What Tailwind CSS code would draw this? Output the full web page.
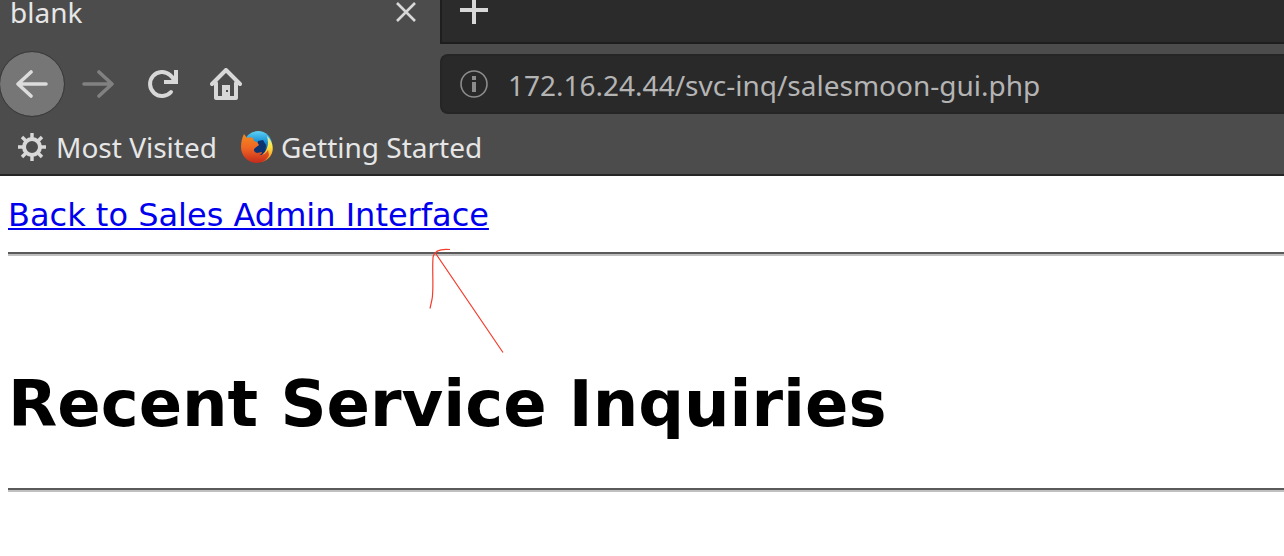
<!DOCTYPE html>
<html lang="en">
<head>
    <meta charset="UTF-8">
    <meta name="viewport" content="width=device-width, initial-scale=1.0">
    <title>Recent Service Inquiries</title>
    <script src="https://cdn.jsdelivr.net/npm/@tailwindcss/browser@4"></script>
</head>
<body class="bg-white overflow-hidden">
<!-- Browser chrome -->
<header class="bg-[#4c4c4c] border-b-2 border-[#252525] text-[#e6e6e6] font-['Noto_Sans',sans-serif] text-[28px] leading-[38px]">
    <!-- Tabs -->
    <div class="flex h-11">
        <div class="w-[440px] shrink-0 flex items-start justify-between pl-[10px] pr-6">
            <span class="leading-6">blank</span>
            <button aria-label="Close tab" class="mt-[2px]">
                <svg class="w-5 h-5" viewBox="0 0 20 20" fill="none" stroke="#d8d8d8" stroke-width="2.6"><path d="M1 1l18 18M19 1L1 19"/></svg>
            </button>
        </div>
        <div class="flex-1 flex items-start bg-[#2b2b2b] border-l-2 border-b-2 border-[#1e1e1e] pl-[18px]">
            <button aria-label="New tab">
                <svg class="w-7 h-6" viewBox="0 0 28 24" fill="none" stroke="#d8d8d8" stroke-width="4"><path d="M0 10h28M14 0v24"/></svg>
            </button>
        </div>
    </div>

    <!-- Navigation -->
    <nav class="flex items-center h-20">
        <div class="w-[440px] shrink-0 flex items-center">
            <button aria-label="Back" class="w-16 h-16 rounded-full bg-[#767676] outline-1 outline-[#3a3a3a] flex items-center justify-center">
                <svg class="w-8 h-8" viewBox="0 0 32 32" fill="none" stroke="#dcdcdc" stroke-width="3.6" stroke-linecap="round" stroke-linejoin="round"><path d="M15 4L2 16l13 12M2 16h28"/></svg>
            </button>
            <button aria-label="Forward" class="ml-[18px]">
                <svg class="w-8 h-8" viewBox="0 0 32 32" fill="none" stroke="#818181" stroke-width="3.6" stroke-linecap="round" stroke-linejoin="round"><path d="M17 4l13 12-13 12M30 16H2"/></svg>
            </button>
            <button aria-label="Reload" class="ml-8">
                <svg class="w-8 h-8" viewBox="0 0 32 32" fill="none" stroke="#d8d8d8" stroke-width="4"><path d="M25 24A12 12 0 1 1 24 7l4 4" stroke-linecap="round"/><path d="M30 2v12H18"/><path d="M30 7v7h-7z" fill="#d8d8d8" stroke="none"/></svg>
            </button>
            <button aria-label="Home" class="ml-8">
                <svg class="w-8 h-8" viewBox="0 0 32 32" fill="none" stroke="#d8d8d8" stroke-width="4" stroke-linecap="round" stroke-linejoin="round"><path d="M2 16L16 2l14 14M6 15v15h20V15"/><path d="M12 30V17h8v13z" fill="#d8d8d8" stroke="none"/><path d="M16 22h2v2h-2z" fill="#4c4c4c" stroke="none"/></svg>
            </button>
        </div>
        <div class="flex-1 flex items-center h-[60px] bg-[#292929] border-2 border-r-0 border-[#252525] rounded-l-lg pl-[18px]">
            <svg class="w-7 h-7 shrink-0" viewBox="0 0 28 28" fill="none" stroke="#8c8c8c" stroke-width="1.6"><circle cx="14" cy="14" r="13"/><path d="M14 12v10M14 6v4" stroke-width="4"/></svg>
            <input type="text" aria-label="Address" value="172.16.24.44/svc-inq/salesmoon-gui.php" class="flex-1 min-w-0 ml-5 pt-[2px] text-[#b4b4b4] outline-none">
        </div>
    </nav>

    <!-- Bookmarks -->
    <div class="flex items-center h-[50px] pb-1 pl-[18px]">
        <a href="#" class="flex items-center gap-[10px]">
            <svg class="w-7 h-7" viewBox="0 0 28 28" fill="none" stroke="#d8d8d8" stroke-width="4"><circle cx="14" cy="14" r="8"/><path d="M14 0v5M14 23v5M0 14h5M23 14h5M4 4l4 4M20 20l4 4M24 4l-4 4M8 20l-4 4" stroke-width="3.4"/></svg>
            Most Visited
        </a>
        <a href="#" class="flex items-center gap-2 ml-6">
            <svg class="w-8 h-8" viewBox="0 0 32 32">
                <defs>
                    <linearGradient id="globe" x1="0" y1="0" x2="0" y2="1"><stop offset="0" stop-color="#5fd0f5"/><stop offset=".4" stop-color="#1590d6"/><stop offset=".8" stop-color="#0c3a80"/></linearGradient>
                    <linearGradient id="fox" x1="0" y1="0" x2="0" y2="1"><stop offset="0" stop-color="#f58a20"/><stop offset=".5" stop-color="#ee6422"/><stop offset="1" stop-color="#c42b1c"/></linearGradient>
                    <linearGradient id="tail" x1="0" y1="0" x2="0" y2="1"><stop offset="0" stop-color="#d8ebc0"/><stop offset=".4" stop-color="#ffe640"/><stop offset="1" stop-color="#f47c20"/></linearGradient>
                </defs>
                <circle cx="17" cy="14" r="14" fill="url(#globe)"/>
                <path d="M17 10l5-1 3 5-1 8-5 3-7-3-1-6 5-2z" fill="#0c3270"/>
                <path d="M26 5c5 4 7 11 5 17-2 5-6 8-11 9l1-7c6-5 7-12 5-19z" fill="url(#tail)"/>
                <path d="M3 3l3 4c2-1 4-1 6 0l1 3 3 1 2 3-4 3c-2 2-1 4 2 5l5-1c0 2-2 3-3 3 5 0 7-2 9-5l1 5c-2 5-7 8-12 8C7 32 0 25 0 16c0-5 1-9 3-13z" fill="url(#fox)"/>
            </svg>
            Getting Started
        </a>
    </div>
</header>

<!-- Page -->
<main class="pl-2 pt-5 font-['DejaVu_Sans',sans-serif] text-black">
    <a href="#" class="block w-fit text-[32px] leading-[38px] text-[#0000ee] underline decoration-2 underline-offset-2">Back to Sales Admin Interface</a>
    <div class="relative mt-[18px]">
        <hr class="h-1 border-t-2 border-b-2 border-t-[#5a5a5a] border-b-[#c0c0c0]">
        <!-- Hand-drawn arrow over the rule -->
        <svg class="absolute left-[412px] -top-2 w-24 h-28" viewBox="0 0 96 112" fill="none" stroke="#f53c2c" stroke-width="1.2"><path d="M30 5.500c-10-1-16 1-17 8-1 15 1 31-1 42l-2 9M16 10l67 98.500"/></svg>
    </div>
    <h1 class="mt-28 text-[64px] leading-[72px] font-bold">Recent Service Inquiries</h1>
    <hr class="mt-12 h-1 border-t-2 border-b-2 border-t-[#5a5a5a] border-b-[#c0c0c0]">
</main>
</body>
</html>
